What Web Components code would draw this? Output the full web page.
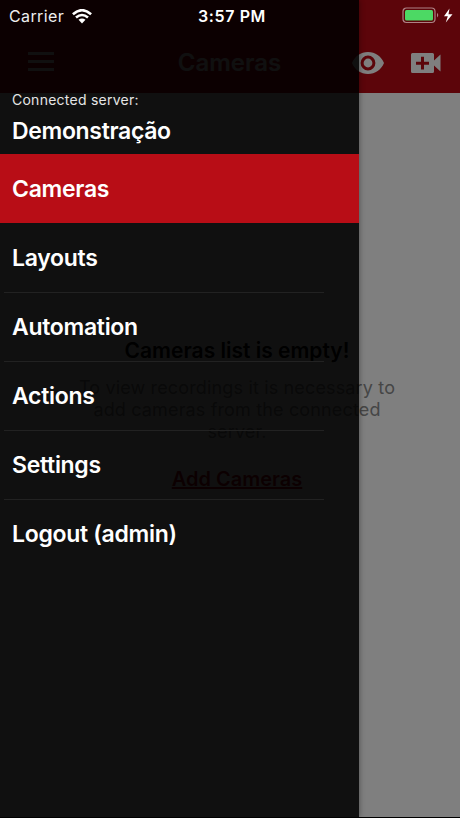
<!DOCTYPE html>
<html lang="en"><head><meta charset="utf-8"><title>Cameras</title>
<style>html,body{margin:0;height:100%;overflow:hidden;background:#000}body{font-family:Inter,"Liberation Sans",sans-serif}</style></head>
<body>
<camera-app></camera-app>
<script>
const define=(name,html)=>{
  const t=document.createElement('template');t.innerHTML=html;
  customElements.define(name,class extends HTMLElement{
    constructor(){super();this.attachShadow({mode:'open'}).append(t.content.cloneNode(true));}
  });
};
define('status-bar',`<style>
:host{display:grid;grid-template-columns:1fr auto 1fr;align-items:center;height:32px;padding:0 5px 0 9px;box-sizing:border-box;color:#fff;font-size:16px}
.l,.r{display:flex;align-items:center}.l{gap:8px}.r{justify-content:flex-end}
.l span{letter-spacing:.38px;color:#eee}.time{font-weight:600;font-size:16px;letter-spacing:.6px}
svg{display:block}</style>
<div class="l"><span>Carrier</span><svg width="20" height="15" viewBox="0 0 20 15"><g fill="none" stroke="#fff" stroke-width="2.6"><path d="M.9 5.2Q10-2.8 19.1 5.2"/><path d="M4 8.6Q10 3.4 16 8.6"/></g><path d="M6.500 10.800Q10 8 13.500 10.800L10 14.400Z" fill="#fff"/></svg></div>
<div class="time">3:57 PM</div>
<div class="r"><svg width="53" height="18" viewBox="0 0 53 18"><rect x="1" y="1" width="32" height="14.500" rx="3.500" fill="none" stroke="#ae8285" stroke-width="1.200"/><rect x="3" y="3" width="28" height="10.500" rx="1.500" fill="#4cd964"/><path d="M35 5.800q2.500 2.300 0 4.600z" fill="#ae8285"/><path d="M47.500 1.500L42 9.200h3.800L43.800 15.500 50.500 7.300h-4z" fill="#fff"/></svg></div>`);
define('nav-header',`<style>
:host{display:block;background:#b80a15;height:93px;box-sizing:border-box;padding-top:32px;color:#fff}
.row{display:grid;grid-template-columns:1fr auto 1fr;align-items:center;height:60px;padding:0 19px 0 28px}
h1{margin:0;font-size:24px;font-weight:600;color:#fff;transform:translateX(-5px)}
.a{display:flex;justify-content:flex-end;align-items:center;gap:27px;padding-top:2px}svg{display:block}</style>
<div class="row"><svg width="27" height="20" viewBox="0 0 27 20" fill="#fff"><path d="M0 0h26v3H0zM0 8h26v3H0zM0 16h26v3H0z"/></svg><h1>Cameras</h1><div class="a">
<svg width="32" height="22" viewBox="0 0 32 22"><path fill="#fff" fill-rule="evenodd" d="M0 11C2.800 4.300 8.700 0 16 0s13.200 4.300 16 11c-2.800 6.700-8.700 11-16 11S2.800 17.700 0 11zm16-7.400a7.400 7.400 0 1 0 0 14.800 7.400 7.400 0 0 0 0-14.800zm0 3a4.400 4.400 0 1 1 0 8.800 4.400 4.400 0 0 1 0-8.800z"/></svg>
<svg width="30" height="20" viewBox="0 0 30 20"><path fill="#fff" fill-rule="evenodd" d="M1.500 0h20Q23 0 23 1.500v6l6.500-6v17l-6.500-6v6Q23 20 21.500 20h-20Q0 20 0 18.500v-17Q0 0 1.500 0zM10 3.800v4.900H5v3h5v4.900h3v-4.900h5v-3h-5V3.800z"/></svg></div></div>`);
define('empty-list',`<style>
:host{display:flex;flex-direction:column;align-items:center;text-align:center;padding:245px 0 0 14px}
h2{margin:0;color:#000;font-size:21px;line-height:26px;font-weight:600;white-space:nowrap}
p{margin:13px 0 0;font-size:18px;line-height:22px;letter-spacing:.15px;color:#8c8c8c;white-space:nowrap}
a{margin-top:24px;color:#b80a15;font-size:20px;line-height:24px;font-weight:600;text-decoration:underline}</style>
<h2>Cameras list is empty!</h2><p>To view recordings it is necessary to<br>add cameras from the connected<br>server.</p><a>Add Cameras</a>`);
define('menu-item',`<style>
:host{display:flex;align-items:center;height:69px;box-sizing:border-box;padding-left:12px;font-size:23px;font-weight:600;letter-spacing:-.3px;color:#fff;position:relative}
:host([line])::after{content:"";position:absolute;left:4px;width:320px;bottom:-1px;height:1px;background:#222}
:host([active]){background:#b80d16}span{padding-top:1px}</style><span><slot></slot></span>`);
define('side-drawer',`<style>
:host{display:flex;flex-direction:column;width:359px;height:817px;box-sizing:border-box;padding-top:91px;background:rgba(0,0,0,.87);box-shadow:1px 0 5px rgba(0,0,0,.3);color:#fff}
small{font-size:14px;line-height:17px;padding-left:12px;letter-spacing:.25px;color:#e5e5e5}
strong{font-size:23px;font-weight:600;line-height:28px;letter-spacing:-.33px;padding-left:12px;margin:9px 0 9px}</style>
<small>Connected server:</small><strong>Demonstração</strong>
<menu-item active>Cameras</menu-item><menu-item line>Layouts</menu-item><menu-item line>Automation</menu-item><menu-item line>Actions</menu-item><menu-item line>Settings</menu-item><menu-item>Logout (admin)</menu-item>`);
define('camera-app',`<style>
:host{display:grid;width:460px;height:817px;background:#fff;overflow:hidden}
:host>*{grid-area:1/1}main{isolation:isolate}.shade,side-drawer,status-bar{z-index:1}.shade{background:rgba(0,0,0,.5)}status-bar{align-self:start}
</style><main><nav-header></nav-header><empty-list></empty-list></main><div class="shade"></div><side-drawer></side-drawer><status-bar></status-bar>`);
</script></body></html>
